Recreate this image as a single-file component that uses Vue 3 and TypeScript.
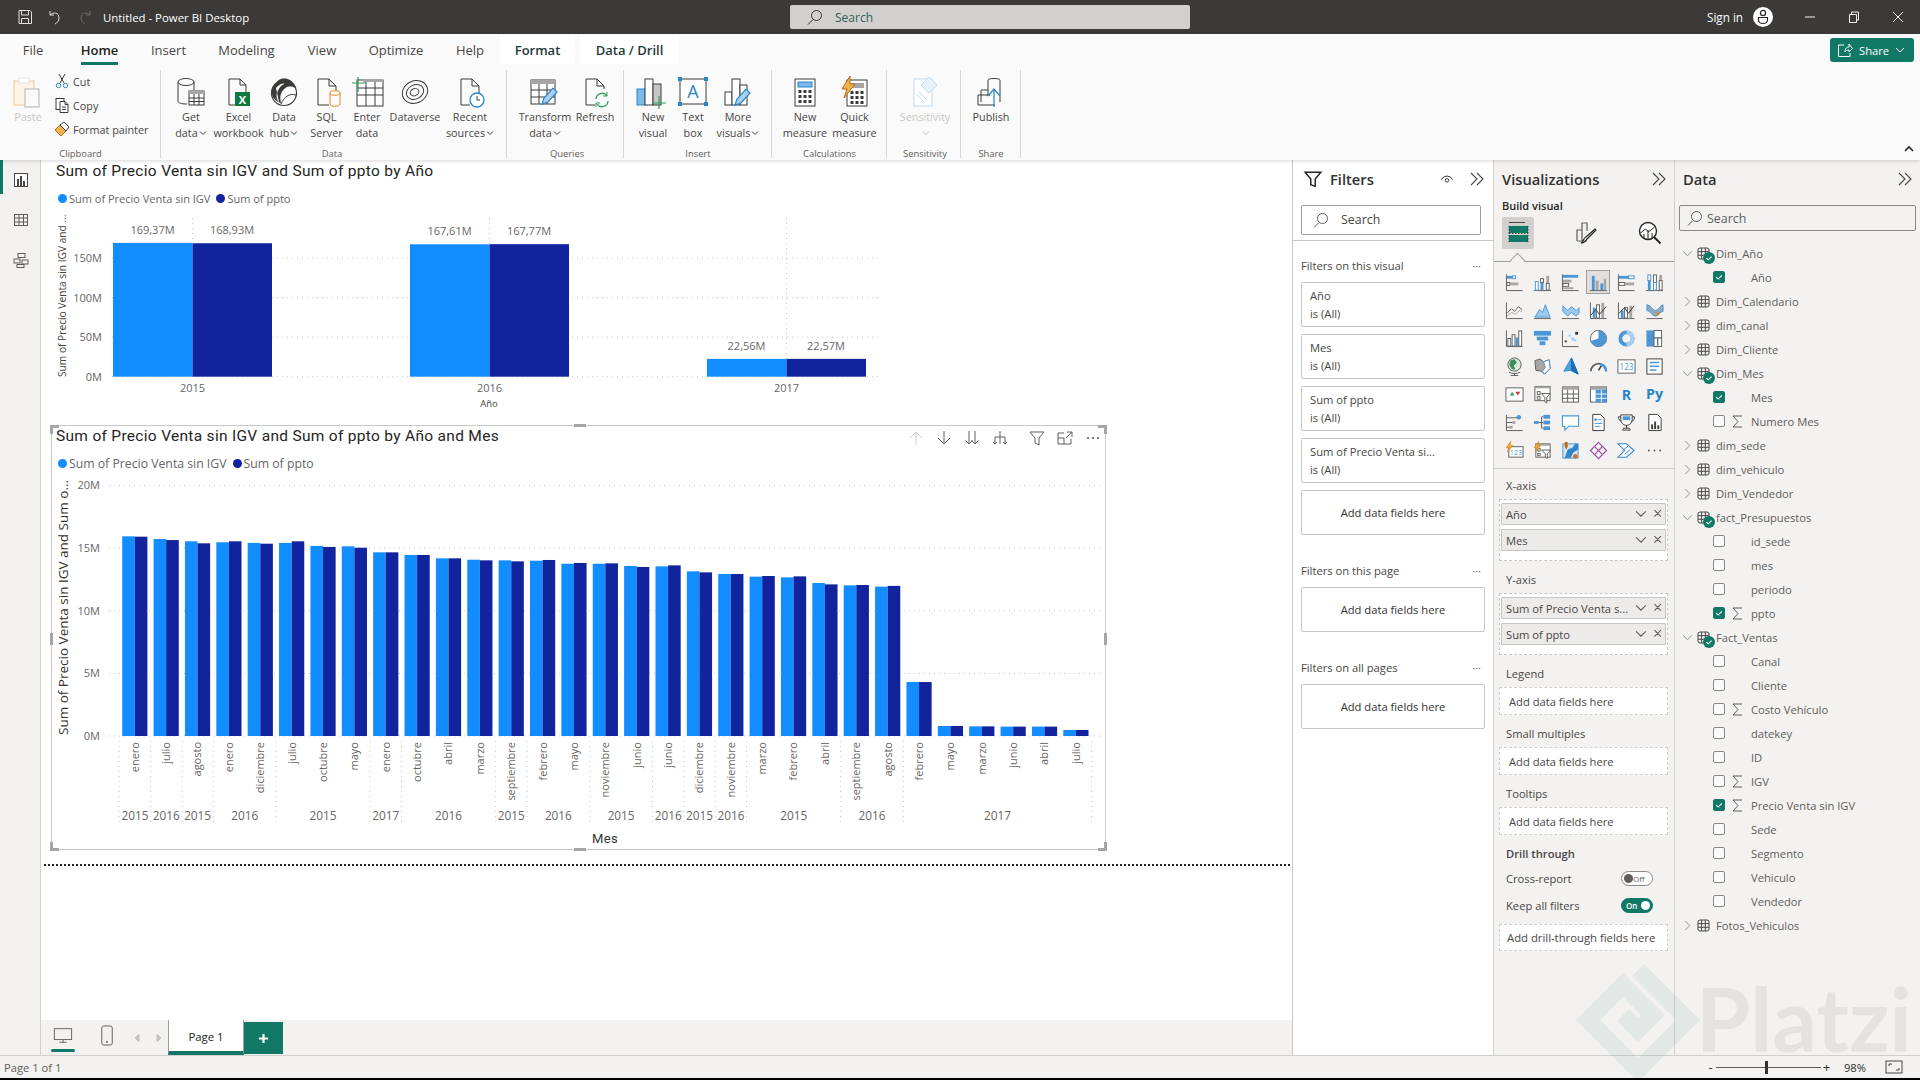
<script setup lang="ts">
import { computed } from 'vue'

const D = '#605e5c'
const K = '#3b3a39'
const B = '#4a96d6'
const L = '#9cc9ee'
const G = '#a8a6a4'
const T = '#117865'
const O = '#e08a1e'

const r = (x: number, y: number, w: number, h: number, f = B, s = 'none') =>
  `<rect x="${x}" y="${y}" width="${w}" height="${h}" fill="${f}" stroke="${s}"/>`
const p = (d: string, s = D, f = 'none', w = 1) =>
  `<path d="${d}" stroke="${s}" fill="${f}" stroke-width="${w}"/>`
const c = (x: number, y: number, rad: number, f = 'none', s = D, w = 1) =>
  `<circle cx="${x}" cy="${y}" r="${rad}" fill="${f}" stroke="${s}" stroke-width="${w}"/>`
const t = (x: number, y: number, s: string, f: string, size: number, weight = 400) =>
  `<text x="${x}" y="${y}" fill="${f}" font-size="${size}" font-weight="${weight}" text-anchor="middle" font-family="Open Sans, sans-serif">${s}</text>`

const axis = p('M1.5 1.5v17h17')
const bolt = p('M6 0.5L1.5 7h3L2.5 11.5 8 5H5z', O, '#f0b24a')

const gallery: string[] = [
  axis + r(2, 3, 6, 3) + r(8, 3, 3, 3, '#fff', B) + r(2, 10, 3, 3, '#fff', D) + r(5, 10, 9, 3, G),
  p('M1 18.5h18') + r(2.5, 9, 3, 9, '#fff', B) + r(8, 10, 3, 8, B) + r(8, 6, 3, 4, '#fff', D) + r(14, 3, 3, 8, G) + r(14, 11, 3, 7, '#fff', D),
  axis + r(2, 2, 16, 3) + r(2, 7, 9, 3, G) + r(2, 11, 6, 3, '#fff', D) + r(2, 15, 11, 2, G),
  p('M1 18.5h18') + r(3, 3, 3, 15, B) + r(7, 8, 3, 10, G) + r(12, 11, 3, 7, B) + r(15.5, 6, 2.5, 12, G),
  axis + r(2, 3, 10, 3, B) + r(12, 3, 6, 3, '#fff', B) + r(2, 10, 6, 3, '#fff', D) + r(8, 10, 10, 3, G),
  p('M1 18.5h18') + r(3, 8, 3, 10, B) + r(3, 2, 3, 6, '#fff', B) + r(9, 2, 3, 8, '#fff', D) + r(9, 10, 3, 8, '#fff', B) + r(15, 2, 3, 6, G) + r(15, 8, 3, 10, '#fff', D),
  axis + p('M2 13l5-5 3 3 4-5 4 3') + p('M2 16l5-4 4 2 4-4 3 1', G),
  p('M1 18.5h18') + p('M2 17l5-8 3 3 3-8 5 13z', B, L),
  p('M1 18.5h18') + p('M2 5l5 5 4-4 5 4 3-3v6l-3 3-5-4-4 4-5-5z', B, L),
  axis + r(4, 7, 3, 11, B) + r(8, 4, 3, 14, '#fff', D) + r(13, 2, 3, 16, G) + p('M2 15l5-6 4 5 7-8', K),
  axis + r(4, 10, 3, 8, B) + r(8, 7, 3, 11, '#fff', D) + r(13, 5, 3, 13, G) + p('M2 13l6-6 4 6 6-8', K),
  p('M1.5 18.5h17', D) + p('M2 4c5 0 5 6 9 6s5-6 8-6v7c-4 0-4 5-8 5s-5-6-9-6z', B, '#8fa7bc') + r(12, 12, 3, 3, O),
  axis + r(3, 10, 3, 8, '#fff', D) + r(7.5, 6, 3, 12, '#fff', D) + r(11, 9, 3, 9, B) + r(14.5, 2, 3, 16, '#fff', D),
  r(1, 2, 18, 5) + r(4, 8, 12, 4) + r(7, 13, 6, 4),
  axis + r(4, 12, 2, 2, K) + r(8, 6, 2, 2, L) + r(11, 9, 3, 3, L) + r(15, 3, 3, 3, K) + r(14, 11, 2, 2, L),
  c(10, 10, 8.5, '#fff') + p('M10 10V1.5a8.5 8.5 0 0 1 0 17 8.5 8.5 0 0 1-8.2-6z', 'none', B),
  c(10, 10, 6.5, 'none', B, 4) + p('M10 3.5a6.5 6.5 0 0 1 0 13', '#a9cfee', 'none', 4),
  r(1.5, 1.5, 8, 17) + r(9.5, 1.5, 8, 8, '#fff', D) + r(9.5, 9.5, 4, 9, '#fff', D) + r(13.5, 9.5, 4, 9, '#fff', D),
  c(10, 8, 7, '#d8e8d8', D) + p('M6 4l4-1 2 3-3 3 1 4-3-1-2-4z', '#3e8e5a', '#3e8e5a') + p('M4 16c4 2 8 2 12 0M10 17v2M6 19.5h8'),
  p('M2 4l5-2 4 3 6-2 1 9-6 6-3-3-6-1z', D, G) + p('M11 5l6-2 1 9-6 6-2-3 3-4z', B, '#fff'),
  p('M11 1L18 18l-8-4-7 1z', '#2a88cc', '#4aa3e0') + p('M11 1v13l7 4z', '#1d6fae', '#1d6fae'),
  p('M2 15a8 8 0 0 1 16 0', D, 'none', 2) + p('M10 14l3-5', K, 'none', 1.6) + p('M12 7.6a8 8 0 0 1 6 7.4', B, 'none', 2.6),
  r(1, 3, 18, 14, '#fff', D) + t(10, 14, '123', B, 8.5),
  r(2, 2, 16, 16, '#fff', K) + r(5, 5, 10, 1.6) + r(5, 9, 10, 1.6) + r(5, 13, 7, 1.6),
  r(1, 3, 18, 14, '#fff', D) + p('M5 11l2.5-4 2.5 4z', 'none', '#2f9e5f') + p('M11 7h5l-2.5 4z', 'none', '#d13438'),
  r(2, 1.5, 16, 15, '#fff', D) + r(2, 1.5, 16, 2, G) + r(4.5, 7, 3, 3, '#fff', D) + r(4.5, 12, 3, 3, '#fff', D) + p('M9 9h9l-3.5 4v6l-2-1.5V13z', D, '#fff'),
  r(1.5, 2, 17, 16, '#fff', D) + r(1.5, 2, 17, 3, G) + p('M1.5 9.5h17M1.5 14h17M7 5v13M13 5v13'),
  r(1.5, 2, 17, 16, '#fff', D) + r(1.5, 2, 17, 3, G) + r(7, 5, 11.5, 13) + p('M7 9.5h11.5M7 14h11.5M13 5v13', '#fff'),
  t(10, 16, 'R', '#2a86c8', 15, 700),
  t(10, 15, 'Py', '#2a86c8', 15, 700),
  p('M1.5 2v16.5h17') + p('M2 5h11M2 10h6M2 15h3', D) + c(14.5, 4.5, 2, B, B) + r(8, 8.5, 3, 3, G) + r(5, 13.5, 3, 3, G),
  r(1, 8.5, 5, 3) + p('M6 10h3M9 4v12M9 4h2M9 10h2M9 16h2') + r(11, 2, 7, 4) + r(11, 8, 7, 4) + r(11, 14, 7, 4),
  p('M1.5 3h17v11H8l-4 4v-4H1.5z', B, '#fff', 1.2),
  p('M4 1.5h8l4 4v13H4z', K, '#fff') + c(7, 7, 1, B, B) + p('M9 7h4M6 11h8M6 14h6', B),
  p('M4 2h12v5a6 6 0 0 1-12 0z', K, '#fff') + r(6, 3.5, 8, 4) + p('M4 4H1.5c0 3 1 4 3 4.5M16 4h2.5c0 3-1 4-3 4.5M10 13v3M6 18h8l-1-2H7z', K),
  p('M4 1.5h9l4 4v13H4z', K, '#fff') + r(6.5, 12, 2, 5, K) + r(9.7, 9, 2, 8, K) + r(13, 13, 2, 4, K),
  r(4, 6, 15, 11, '#fff', D) + t(11.5, 15, '123', B, 7.5) + bolt,
  r(3, 3, 15, 14, '#fff', D) + r(3, 3, 15, 2, G) + r(5, 8, 2.5, 2.5, '#fff', D) + r(5, 13, 2.5, 2.5, '#fff', D) + p('M9 9.5h9.5l-3.5 4v5l-2-1.5v-3.5z', D, '#fff') + bolt,
  r(2, 3, 16, 15, '#d5e6f5', B) + p('M4 18l3-9 5-2 3-4h3v6l-5 3-3 6z', 'none', '#2f86c8') + p('M4 1h3v5L5.5 9 4 6z', 'none', '#c8640c') + c(15, 16, 2.4, '#d9701c', 'none'),
  p('M10 1.5L18.5 10 10 18.5 1.5 10z', '#9c4aa8', 'none', 1.2) + p('M6 6l8 8M14 6l-8 8', '#9c4aa8', 'none', 1.2),
  p('M1 3h9l8 7-8 7H1l7-7z', '#2f86c8', '#fff', 1.1) + p('M6 10l6-5M8 14l6-5', '#2f86c8'),
  `<g fill="${D}"><circle cx="4" cy="10" r="1"/><circle cx="10" cy="10" r="1"/><circle cx="16" cy="10" r="1"/></g>`
]

const pencil = (x: number, y: number) =>
  `<g transform="translate(${x} ${y})">` + p('M0 16l2-6L11 0l4 4-9 10z', '#2a86c8', '#a8d0f0', 1.2) + '</g>'

const big = {
  getData: p('M3 6v19c0 2 3 3 9 3', K) + `<ellipse cx="11" cy="6" rx="8" ry="3.5" fill="#fff" stroke="${K}"/>` + p('M19 6v8', K) + r(14, 15, 15, 14, '#fff', K) + r(14, 15, 15, 3, G) + p('M14 22h15M14 25.5h15M19 18v11M24 18v11', K),
  excel: p('M6 3h11l6 6v9M17 3v6h6M6 3v26h7', K) + r(12, 16, 15, 14, '#10793f') + t(19.5, 27.5, 'X', '#fff', 11, 700),
  hub: c(16, 17, 12.5, '#fff', K, 1.2) + p('M13 3c6-2 13 2 15 9-6-3-9-2-12 1s-5 7-3 14C6 25 3 19 4 14c1-5 5-9 9-11z', K, K, 0.3) + p('M8 12c3-3 6-5 8-4-3 1-6 5-7 9s0 7 2 9', '#fff', '#fff', 0.3) + p('M13 28c3-7 8-11 15-9', K),
  sql: p('M7 3h11l7 7v5M18 3v7h7M7 3v26h11', K) + `<ellipse cx="24" cy="17" rx="5" ry="2.2" fill="#fff" stroke="${O}"/>` + p('M19 17v11c0 3 10 3 10 0V17', O),
  enter: r(6, 4, 26, 26, '#fff', K) + r(12, 3, 20, 3, G) + p('M6 12h26M6 19h26M15 6v24M24 6v24', K) + p('M7 1v15M1 7h14', '#2f9e5f', 'none', 1.2),
  dataverse: `<g transform="rotate(-25 16 16)" fill="none" stroke="${K}"><ellipse cx="16" cy="16" rx="13" ry="11"/><ellipse cx="16" cy="16" rx="9" ry="7"/><ellipse cx="15.500" cy="16" rx="4.500" ry="3.500"/></g>`,
  recent: p('M7 3h11l7 7v10M18 3v7h7M7 3v26h9', K) + c(23, 24, 7, '#fff', '#2a86c8', 1.3) + p('M23 20v4h3', K),
  transform: r(2, 4, 24, 24, '#fff', K) + r(2, 4, 24, 4, G) + p('M2 14h24M2 21h24M10 8v20M18 8v20', K) + pencil(13, 12),
  refresh: p('M7 3h11l7 7v3M18 3v7h7M7 3v26h9', K) + p('M17 23a6 6 0 0 1 11-3M29 25a6 6 0 0 1-11 3', '#2f9e5f', 'none', 1.3) + p('M28 16v4h-4M17 31v-4h4', '#2f9e5f'),
  visual: r(0, 13, 8, 16, '#7db8ea', '#2a86c8') + r(8, 3, 8, 26, '#fff', K) + r(16, 8, 8, 21, '#c8c6c4', K) + p('M22 20v13M16 27h13', '#2f9e5f', 'none', 1.2),
  text: r(3, 3, 26, 25, '#fff', K) + t(16, 22, 'A', '#2a86c8', 18) + r(1, 1, 4, 4, '#2a86c8') + r(27, 1, 4, 4, '#2a86c8') + r(1, 26, 4, 4, '#2a86c8') + r(27, 26, 4, 4, '#2a86c8'),
  more: r(3, 16, 7, 13, '#fff', K) + r(10, 3, 8, 26, '#fff', K) + r(18, 9, 7, 20, '#fff', K) + pencil(13, 13),
  measure: r(6, 3, 20, 27, '#fff', K) + r(9, 6, 14, 5, '#7db8ea', '#2a86c8') + `<g fill="${K}">` + [14, 19, 24].map(y => [9.5, 14.5, 19.5].map(x => `<rect x="${x}" y="${y}" width="3" height="3"/>`).join('')).join('') + '</g>',
  quick: r(8, 4, 20, 26, '#fff', K) + r(11, 7, 14, 5, G) + `<g fill="${K}">` + [15, 20, 25].map(y => [11.5, 16.5, 21.5].map(x => `<rect x="${x}" y="${y}" width="3" height="3"/>`).join('')).join('') + '</g>' + p('M11 0L3 13h5L5 22l11-14h-5z', '#b56a10', '#f0b24a'),
  sensitivity: r(5, 3, 18, 27, '#fff', '#bcdcf2') + p('M8 19l8 8M10 16l8 8M20 1l8 8-8 8-8-8z', '#bcdcf2', '#e8f2fa'),
  publish: p('M6 26V14h7M13 20V4c0-2 12-2 12 0v22M3 29V19h12M3 29h17', K) + p('M19 31V14M13 20l6-7 6 7', '#2a86c8', 'none', 1.2),
  paste: r(2, 5, 20, 24, '#fdf3e6', '#efc999') + r(7, 2, 10, 5, '#fff', '#e6e3e0') + r(13, 13, 14, 18, '#fafafa', '#b5b3b1')
}

interface Btn { lines: string[]; icon: string; w: number; caret?: boolean; off?: boolean }
interface Grp { label: string; pl: number; pr: number; items: Btn[] }

const groups: Grp[] = [
  { label: 'Data', pl: 6, pr: 10, items: [
    { lines: ['Get', 'data'], icon: big.getData, w: 48, caret: true },
    { lines: ['Excel', 'workbook'], icon: big.excel, w: 47 },
    { lines: ['Data', 'hub'], icon: big.hub, w: 44, caret: true },
    { lines: ['SQL', 'Server'], icon: big.sql, w: 41 },
    { lines: ['Enter', 'data'], icon: big.enter, w: 40 },
    { lines: ['Dataverse'], icon: big.dataverse, w: 56 },
    { lines: ['Recent', 'sources'], icon: big.recent, w: 54, caret: true }
  ] },
  { label: 'Queries', pl: 10, pr: 7, items: [
    { lines: ['Transform', 'data'], icon: big.transform, w: 56, caret: true },
    { lines: ['Refresh'], icon: big.refresh, w: 44 }
  ] },
  { label: 'Insert', pl: 7, pr: 7, items: [
    { lines: ['New', 'visual'], icon: big.visual, w: 44 },
    { lines: ['Text', 'box'], icon: big.text, w: 36 },
    { lines: ['More', 'visuals'], icon: big.more, w: 54, caret: true }
  ] },
  { label: 'Calculations', pl: 8, pr: 8, items: [
    { lines: ['New', 'measure'], icon: big.measure, w: 50 },
    { lines: ['Quick', 'measure'], icon: big.quick, w: 49 }
  ] },
  { label: 'Sensitivity', pl: 8, pr: 6, items: [
    { lines: ['Sensitivity', ''], icon: big.sensitivity, w: 60, caret: true, off: true }
  ] },
  { label: 'Share', pl: 8, pr: 8, items: [
    { lines: ['Publish'], icon: big.publish, w: 44 }
  ] }
]

const tabs = [
  { n: 'File', w: 60 }, { n: 'Home', w: 73, active: true }, { n: 'Insert', w: 65 }, { n: 'Modeling', w: 91 },
  { n: 'View', w: 60 }, { n: 'Optimize', w: 88 }, { n: 'Help', w: 60 },
  { n: 'Format', w: 75, ctx: true }, { n: 'Data / Drill', w: 99, ctx: true, gap: true }
]

const clip = [
  { n: 'Cut', i: p('M5 1l5 9M11 1L6 10', K) + c(4.5, 12.5, 2.2, 'none', '#2a86c8') + c(11.5, 12.5, 2.2, 'none', '#2a86c8') },
  { n: 'Copy', i: r(2, 1.5, 8, 11, '#fff', K) + p('M6 4.5h5l3 3v8H6zM11 4.5v3h3M8 10h4M8 12.5h4', K, '#fff') },
  { n: 'Format painter', i: p('M1 9l5-5 6 6-5 5z', '#b56a10', '#f0b24a') + p('M6 4l4-3 5 5-3 4z', K, '#fff') }
]

const filterCards = ['Año', 'Mes', 'Sum of ppto', 'Sum of Precio Venta si...']

const Row = (n: string, kind: 'closed' | 'open' | 'field', o: { on?: boolean; sum?: boolean } = {}) => ({ n, kind, ...o })
const rows = [
  Row('Dim_Año', 'open'), Row('Año', 'field', { on: true }),
  Row('Dim_Calendario', 'closed'), Row('dim_canal', 'closed'), Row('Dim_Cliente', 'closed'),
  Row('Dim_Mes', 'open'), Row('Mes', 'field', { on: true }), Row('Numero Mes', 'field', { sum: true }),
  Row('dim_sede', 'closed'), Row('dim_vehiculo', 'closed'), Row('Dim_Vendedor', 'closed'),
  Row('fact_Presupuestos', 'open'), Row('id_sede', 'field'), Row('mes', 'field'), Row('periodo', 'field'),
  Row('ppto', 'field', { on: true, sum: true }),
  Row('Fact_Ventas', 'open'), Row('Canal', 'field'), Row('Cliente', 'field'),
  Row('Costo Vehículo', 'field', { sum: true }), Row('datekey', 'field'), Row('ID', 'field'),
  Row('IGV', 'field', { sum: true }), Row('Precio Venta sin IGV', 'field', { on: true, sum: true }),
  Row('Sede', 'field'), Row('Segmento', 'field'), Row('Vehiculo', 'field'), Row('Vendedor', 'field'),
  Row('Fotos_Vehiculos', 'closed')
]

/* Chart 1 */
const y1 = (v: number) => 376.7 - v * 0.79
const ticks1 = [150, 100, 50, 0]
const years1 = [
  { y: '2015', x: 113, a: 169.37, b: 168.93, la: '169,37M', lb: '168,93M' },
  { y: '2016', x: 410, a: 167.61, b: 167.77, la: '167,61M', lb: '167,77M' },
  { y: '2017', x: 707, a: 22.56, b: 22.57, la: '22,56M', lb: '22,57M' }
]

/* Chart 2 */
const months: [string, number, number, number][] = [
  ['enero', 15.95, 15.92, 2015], ['julio', 15.73, 15.65, 2016], ['agosto', 15.55, 15.39, 2015],
  ['enero', 15.47, 15.55, 2016], ['diciembre', 15.42, 15.36, 2016], ['julio', 15.42, 15.55, 2015],
  ['octubre', 15.18, 15.10, 2015], ['mayo', 15.15, 15.04, 2015], ['enero', 14.67, 14.67, 2017],
  ['octubre', 14.46, 14.46, 2016], ['abril', 14.19, 14.19, 2016], ['marzo', 14.08, 14.03, 2016],
  ['septiembre', 14.03, 13.95, 2015], ['febrero', 14.0, 14.06, 2016], ['mayo', 13.76, 13.82, 2016],
  ['noviembre', 13.76, 13.79, 2015], ['junio', 13.58, 13.5, 2015], ['junio', 13.55, 13.63, 2016],
  ['diciembre', 13.15, 13.07, 2015], ['noviembre', 12.94, 12.94, 2016], ['marzo', 12.73, 12.78, 2015],
  ['febrero', 12.67, 12.75, 2015], ['abril', 12.22, 12.11, 2015], ['septiembre', 12.03, 12.06, 2016],
  ['agosto', 11.93, 11.99, 2016], ['febrero', 4.31, 4.31, 2017], ['mayo', 0.8, 0.8, 2017],
  ['marzo', 0.77, 0.77, 2017], ['junio', 0.75, 0.75, 2017], ['abril', 0.75, 0.75, 2017], ['julio', 0.48, 0.48, 2017]
]
const X0 = 119.2
const PER = 31.37
const BW = 12.6
const y2 = (v: number) => 736 - v * 12.52
const ticks2 = [20, 15, 10, 5, 0]
const bars2 = computed(() => months.map((m, i) => ({ name: m[0], a: m[1], b: m[2], x: X0 + i * PER })))
const spans = computed(() => {
  const out: { year: number; start: number; end: number }[] = []
  months.forEach((m, i) => {
    const last = out[out.length - 1]
    if (last && last.year === m[3]) last.end = i + 1
    else out.push({ year: m[3], start: i, end: i + 1 })
  })
  return out
})
const header = [
  { k: 'up', i: p('M8 15V2M2 8l6-6 6 6', '#d2d0ce') },
  { k: 'down', i: p('M8 1v13M2 8l6 6 6-6', '#605e5c') },
  { k: 'dbl', i: p('M5 1v13M1.5 10.5L5 14l3.5-3.5M11 1v13M7.5 10.5L11 14l3.5-3.5', '#605e5c') },
  { k: 'tree', i: p('M8 1v6M3 7h10M3 7v7M13 7v7M1 12l2 2 2-2M11 12l2 2 2-2M8 7v7', '#605e5c') },
  { k: 'filter', i: p('M1 2h14L10 8v7l-4-2V8z', '#605e5c'), gap: true },
  { k: 'focus', i: p('M7 3H1v11h13V9M1 8h6v6M10 2h5v5M15 2L9 8', '#605e5c') },
  { k: 'more', i: `<g fill="#605e5c"><circle cx="3" cy="8" r="1.1"/><circle cx="8" cy="8" r="1.1"/><circle cx="13" cy="8" r="1.1"/></g>` }
]

const chevrons = p('M3 3l6 6-6 6M9 3l6 6-6 6', '#484644', 'none', 1.1)
const searchI = p('M9.5 1.5a5 5 0 1 1 0 10 5 5 0 0 1 0-10zM6 10.5l-5 5', '#605e5c', 'none', 1)
const tableI = r(1, 1, 11, 11, 'none', '#484644').replace('<rect', '<rect rx="2"') + p('M1 4.6h11M1 8.3h11M4.6 1v11M8.3 1v11', '#484644')
const sigma = p('M11 2H2l5 5.5L2 13h9', '#605e5c')
const pillIc = p('M1 2l4.500 4.500L10 2M18 1l6 6M24 1l-6 6', '#605e5c')
</script>

<template>
  <div class="app">
    <header class="titlebar">
      <div class="tb-left">
        <svg class="tb-ic" viewBox="0 0 16 16" v-html="p('M2 1.5h11l1.500 1.500v11.500H2zM4.500 1.500v4.500h7V1.500M4.500 14.500V9.500h7v5', '#e1dfdd')"></svg>
        <svg class="tb-ic" viewBox="0 0 16 16" v-html="p('M3 2v4h4M3 6c3-3 9-3 9 3 0 3-2 5-4 6', '#e1dfdd')"></svg>
        <svg class="tb-ic" viewBox="0 0 16 16" v-html="p('M13 2v4H9M13 6c-3-3-9-3-9 3 0 3 2 5 4 6', '#6d6c6a')"></svg>
        <span class="tb-title">Untitled - Power BI Desktop</span>
      </div>
      <div class="tb-search">
        <svg class="ic16" viewBox="0 0 16 16" v-html="p('M9.500 1.500a5 5 0 1 1 0 10 5 5 0 0 1 0-10zM6 10.500l-5 5', '#3b3a39')"></svg>
        <span>Search</span>
      </div>
      <div class="tb-right">
        <span class="signin">Sign in</span>
        <svg class="avatar" viewBox="0 0 20 20" v-html="c(10,10,10,'#fff','none') + c(10,6,2.600,'none','#252423',1.200) + p('M5.500 10.500h9v2.500c0 2-2 3.500-4.500 3.500s-4.500-1.500-4.500-3.500z','#252423','none',1.200)"></svg>
        <div class="win"><svg viewBox="0 0 12 12" v-html="p('M1 6h10','#f3f2f1')"></svg></div>
        <div class="win"><svg viewBox="0 0 12 12" v-html="p('M1.500 3.500h7v8h-7zM3.500 3.500V1h7v8H8.500','#f3f2f1')"></svg></div>
        <div class="win"><svg viewBox="0 0 12 12" v-html="p('M1 1l10 10M11 1L1 11','#f3f2f1')"></svg></div>
      </div>
    </header>

    <section class="ribbon">
      <nav class="tabs">
        <div
          v-for="tab in tabs"
          :key="tab.n"
          class="tab"
          :class="{ active: tab.active, ctx: tab.ctx, gap: tab.gap }"
          :style="{ width: tab.w + 'px' }"
        >{{ tab.n }}<i v-if="tab.active" class="tab-bar"></i></div>
        <button class="share">
          <svg class="ic16" viewBox="0 0 16 16" v-html="p('M7 3H1.500v11.500H13V11M8 10c0-4 2-5 4-5V2l3.500 4.500L12 10V8c-2 0-3 .5-4 2z','#fff')"></svg>
          <span>Share</span>
          <svg class="ic9" viewBox="0 0 10 10" v-html="p('M1 3l4 4 4-4','#fff')"></svg>
        </button>
      </nav>
      <div class="groups">
        <div class="group clipboard">
          <div class="group-body">
            <div class="paste">
              <svg class="big" viewBox="0 0 32 32" v-html="big.paste"></svg>
              <span>Paste</span>
            </div>
            <div class="clip-list">
              <div v-for="a in clip" :key="a.n" class="clip-item">
                <svg class="ic16" viewBox="0 0 16 16" v-html="a.i"></svg>
                <span>{{ a.n }}</span>
              </div>
            </div>
          </div>
          <div class="group-label">Clipboard</div>
        </div>
        <div
          v-for="g in groups"
          :key="g.label"
          class="group"
          :style="{ paddingLeft: g.pl + 'px', paddingRight: g.pr + 'px' }"
        >
          <div class="group-body">
            <div
              v-for="b in g.items"
              :key="b.lines.join()"
              class="rbtn"
              :class="{ off: b.off }"
              :style="{ width: b.w + 'px' }"
            >
              <svg class="big" viewBox="0 0 32 32" v-html="b.icon"></svg>
              <span v-for="(l, i) in b.lines" :key="i" class="rline">{{ l }}<svg
                v-if="b.caret && i === b.lines.length - 1"
                class="caret"
                viewBox="0 0 8 8"
                v-html="p('M1 2.500l3 3 3-3', b.off ? '#c8c6c4' : '#3b3a39')"
              ></svg></span>
            </div>
          </div>
          <div class="group-label">{{ g.label }}</div>
        </div>
      </div>
      <svg class="collapse" viewBox="0 0 10 8" v-html="p('M1 6l4-4 4 4', '#252423', 'none', 1.600)"></svg>
    </section>

    <main class="main">
      <aside class="rail">
        <i class="rail-mark"></i>
        <svg class="rail-ic" viewBox="0 0 16 16" v-html="r(1.500,1.500,13,13,'#fff','#484644') + r(4,7,2,7,'#484644') + r(7,4,2,10,'#484644') + r(10,9,2,5,'#484644')"></svg>
        <svg class="rail-ic" viewBox="0 0 16 16" v-html="r(1.500,2.500,13,11,'none','#605e5c') + p('M1.500 6h13M1.500 10h13M6 2.500v11M10.500 2.500v11')"></svg>
        <svg class="rail-ic" viewBox="0 0 16 16" v-html="r(5,1.500,7,4,'none','#605e5c') + r(1,7,6,4,'none','#605e5c') + r(9,8,6,4,'none','#605e5c') + r(4,12.500,7,3,'none','#605e5c')"></svg>
      </aside>

      <div class="center">
        <div class="canvas">
          <article class="visual v1">
            <h2 class="vtitle">Sum of Precio Venta sin IGV and Sum of ppto by Año</h2>
            <div class="legend small">
              <i class="dot a"></i><span>Sum of Precio Venta sin IGV</span>
              <i class="dot b"></i><span>Sum of ppto</span>
            </div>
            <svg class="plot p1" viewBox="51 210 1055 205">
              <line v-for="tk in ticks1" :key="tk" x1="112" x2="880" :y1="y1(tk)" :y2="y1(tk)" class="grid" />
              <line v-for="yr in years1" :key="'v' + yr.y" :x1="yr.x + 79.500" :x2="yr.x + 79.500" y1="218" :y2="y1(yr.a)" class="grid" />
              <text v-for="tk in ticks1" :key="'t' + tk" x="102" :y="y1(tk)" dy=".35em" text-anchor="end" class="tick">{{ tk }}M</text>
              <text class="ytitle-s" transform="rotate(-90 62 377)" x="62" y="377" dy=".35em">Sum of Precio Venta sin IGV and ...</text>
              <g v-for="yr in years1" :key="yr.y">
                <rect :x="yr.x" :y="y1(yr.a)" width="79.500" :height="376.700 - y1(yr.a)" fill="#118dff" />
                <rect :x="yr.x + 79.500" :y="y1(yr.b)" width="79.500" :height="376.700 - y1(yr.b)" fill="#12239e" />
                <text :x="yr.x + 39.500" :y="y1(yr.a) - 13" dy=".35em" text-anchor="middle" class="tick">{{ yr.la }}</text>
                <text :x="yr.x + 119" :y="y1(yr.a) - 13" dy=".35em" text-anchor="middle" class="tick">{{ yr.lb }}</text>
                <text :x="yr.x + 79.500" y="388" dy=".35em" text-anchor="middle" class="tick">{{ yr.y }}</text>
              </g>
              <text x="489" y="404" dy=".35em" text-anchor="middle" class="xtitle-s">Año</text>
            </svg>
          </article>

          <article class="visual v2">
            <h2 class="vtitle">Sum of Precio Venta sin IGV and Sum of ppto by Año and Mes</h2>
            <div class="legend">
              <i class="dot a"></i><span>Sum of Precio Venta sin IGV</span>
              <i class="dot b"></i><span>Sum of ppto</span>
            </div>
            <svg class="plot p2" viewBox="51 478 1055 372">
              <line v-for="tk in ticks2" :key="tk" x1="109" x2="1102" :y1="y2(tk)" :y2="y2(tk)" class="grid" />
              <text v-for="tk in ticks2" :key="'t' + tk" x="100" :y="y2(tk)" dy=".35em" text-anchor="end" class="tick">{{ tk }}M</text>
              <text class="ytitle" transform="rotate(-90 63 735)" x="63" y="735" dy=".35em">Sum of Precio Venta sin IGV and Sum o...</text>
              <g v-for="m in bars2" :key="m.x">
                <rect :x="m.x + 3" :y="y2(m.a)" :width="BW" :height="736 - y2(m.a)" fill="#118dff" />
                <rect :x="m.x + 3 + BW" :y="y2(m.b)" :width="BW" :height="736 - y2(m.b)" fill="#12239e" />
                <text class="month" :transform="`rotate(-90 ${m.x + PER / 2} 742)`" :x="m.x + PER / 2" y="742" dy=".35em" text-anchor="end">{{ m.name }}</text>
              </g>
              <g v-for="s in spans" :key="s.start">
                <line :x1="X0 + s.start * PER" :x2="X0 + s.start * PER" y1="741" y2="826" class="grid" />
                <text :x="X0 + (s.start + s.end) / 2 * PER" y="816" dy=".35em" text-anchor="middle" class="year">{{ s.year }}</text>
              </g>
              <line :x1="X0 + 31 * PER" :x2="X0 + 31 * PER" y1="741" y2="826" class="grid" />
              <text x="605" y="838" dy=".35em" text-anchor="middle" class="xtitle">Mes</text>
            </svg>
            <div class="frame">
              <i class="h tl"></i><i class="h tr"></i><i class="h bl"></i><i class="h br"></i>
              <i class="m mt"></i><i class="m mb"></i><i class="m ml"></i><i class="m mr"></i>
            </div>
            <div class="vheader">
              <svg
                v-for="hd in header"
                :key="hd.k"
                class="ic16 vh"
                :class="{ gap: hd.gap }"
                viewBox="0 0 16 16"
                v-html="hd.i"
              ></svg>
            </div>
          </article>

          <div class="page-end"></div>
        </div>
        <div class="pagebar">
          <div class="view-btn">
            <svg class="pv" viewBox="0 0 22 18" v-html="r(1.500,1.500,19,12,'none','#605e5c') + p('M11 13.500v3M7 16.500h8')"></svg>
            <i class="view-line"></i>
          </div>
          <div class="view-btn phone">
            <svg class="pv2" viewBox="0 0 14 22" v-html="r(1.500,1,11,20,'none','#605e5c').replace('<rect','<rect rx=&quot;2&quot;') + r(6,17,2,1.500,'#605e5c')"></svg>
          </div>
          <svg class="nav" viewBox="0 0 8 10" v-html="p('M6 1L2 5l4 4z','#c8c6c4','#c8c6c4')"></svg>
          <svg class="nav n2" viewBox="0 0 8 10" v-html="p('M2 1l4 4-4 4z','#c8c6c4','#c8c6c4')"></svg>
          <div class="page-tab">Page 1</div>
          <div class="add-tab">
            <svg viewBox="0 0 12 12" v-html="p('M6 1v10M1 6h10','#fff','none',2.400)"></svg>
          </div>
        </div>
      </div>

      <aside class="filters">
        <div class="panel-head">
          <svg class="ic18" viewBox="0 0 16 16" v-html="p('M1 2h14L10 8v6.500L6 13V8z','#252423','none',1.300)"></svg>
          <span class="panel-title">Filters</span>
          <svg class="eye" viewBox="0 0 16 16" v-html="p('M1.500 9a7 7 0 0 1 13 0','#252423') + c(8,9.500,2,'none','#252423')"></svg>
          <svg class="chev" viewBox="0 0 18 18" v-html="chevrons"></svg>
        </div>
        <div class="f-search">
          <svg class="ic16" viewBox="0 0 16 16" v-html="searchI"></svg>
          <span>Search</span>
        </div>
        <div class="f-rule"></div>
        <div class="f-sec first"><span>Filters on this visual</span><b>···</b></div>
        <div v-for="fc in filterCards" :key="fc" class="f-card">
          <span>{{ fc }}</span>
          <span>is (All)</span>
        </div>
        <div class="f-card add">Add data fields here</div>
        <div class="f-sec"><span>Filters on this page</span><b>···</b></div>
        <div class="f-card add">Add data fields here</div>
        <div class="f-sec"><span>Filters on all pages</span><b>···</b></div>
        <div class="f-card add">Add data fields here</div>
      </aside>

      <aside class="viz">
        <div class="panel-head tight">
          <span class="panel-title">Visualizations</span>
          <svg class="chev end" viewBox="0 0 18 18" v-html="chevrons"></svg>
        </div>
        <div class="build">Build visual</div>
        <div class="build-tabs">
          <div class="bt sel">
            <svg viewBox="0 0 24 24" v-html="p('M3 1.500h16','#484644') + r(3,5,19,7,T) + r(3,14,19,7,T) + p('M3 5v16M22 5v16M3 12.500h19','#252423','none',.8).replace('stroke-width','stroke-dasharray=&quot;1.500 1.500&quot; stroke-width')"></svg>
          </div>
          <div class="bt second">
            <svg viewBox="0 0 24 24" v-html="p('M9 20V2h5v8M4 20v-11h5M14 20h-10', '#605e5c', 'none', 1.200) + p('M23 9L14 18c-1 1-2 4-6 4 3-1 2-5 5-6l9-8z', '#252423', '#fff', 1.200)"></svg>
          </div>
          <div class="bt third">
            <svg viewBox="0 0 24 24" v-html="c(10,10,8.500,'#fff','#252423',1.400) + p('M6 18v-5M10 18V9M14 18v-6M2.500 12l5-4 3 3 6-5', '#252423') + p('M16 16l6.500 6.500', '#252423', 'none', 2)"></svg>
          </div>
        </div>
        <div class="viz-rule"><i class="notch"></i></div>
        <div class="gallery">
          <div v-for="(g, i) in gallery" :key="i" class="cell" :class="{ sel: i === 3 }">
            <svg viewBox="0 0 20 20" v-html="g"></svg>
          </div>
        </div>
        <div class="viz-rule low"></div>
        <div class="wells">
          <div class="wl">X-axis</div>
          <div class="well full">
            <div class="pill"><span>Año</span><svg viewBox="0 0 25 10" v-html="pillIc"></svg></div>
            <div class="pill"><span>Mes</span><svg viewBox="0 0 25 10" v-html="pillIc"></svg></div>
          </div>
          <div class="wl">Y-axis</div>
          <div class="well full">
            <div class="pill"><span>Sum of Precio Venta s...</span><svg viewBox="0 0 25 10" v-html="pillIc"></svg></div>
            <div class="pill"><span>Sum of ppto</span><svg viewBox="0 0 25 10" v-html="pillIc"></svg></div>
          </div>
          <div class="wl">Legend</div>
          <div class="well">Add data fields here</div>
          <div class="wl">Small multiples</div>
          <div class="well">Add data fields here</div>
          <div class="wl">Tooltips</div>
          <div class="well">Add data fields here</div>
          <div class="wl semi">Drill through</div>
          <div class="drill-row">
            <span>Cross-report</span>
            <span class="toggle"><em>Off</em><i></i></span>
          </div>
          <div class="drill-row">
            <span>Keep all filters</span>
            <span class="toggle on"><em>On</em><i></i></span>
          </div>
          <div class="well drill">Add drill-through fields here</div>
        </div>
      </aside>

      <aside class="data">
        <div class="panel-head tight">
          <span class="panel-title">Data</span>
          <svg class="chev end" viewBox="0 0 18 18" v-html="chevrons"></svg>
        </div>
        <div class="d-search">
          <svg class="ic16" viewBox="0 0 16 16" v-html="searchI"></svg>
          <span>Search</span>
        </div>
        <ul class="tree">
          <li v-for="row in rows" :key="row.n" class="row" :class="row.kind">
            <template v-if="row.kind !== 'field'">
              <svg class="tw" viewBox="0 0 12 12" v-html="row.kind === 'open' ? p('M1 3.500l5 5 5-5','#8a8886') : p('M3.500 1l5 5-5 5','#8a8886')"></svg>
              <span class="tbl">
                <svg viewBox="0 0 13 13" v-html="tableI"></svg>
                <svg v-if="row.kind === 'open'" class="badge" viewBox="0 0 12 12" v-html="c(6,6,6,T,'none') + p('M3.500 6.200l1.800 1.600 3.200-3.200','#fff','none',1.200)"></svg>
              </span>
            </template>
            <template v-else>
              <span class="cb" :class="{ on: row.on }">
                <svg v-if="row.on" viewBox="0 0 12 12" v-html="p('M2.500 6.200l2.500 2.300 4.500-4.500','#fff','none',1.300)"></svg>
              </span>
              <span class="sum"><svg v-if="row.sum" viewBox="0 0 13 15" v-html="sigma"></svg></span>
            </template>
            <span class="rname">{{ row.n }}</span>
          </li>
        </ul>
      </aside>
    </main>

    <footer class="status">
      <span>Page 1 of 1</span>
      <div class="zoom">
        <span class="zb">-</span>
        <span class="track"><i></i></span>
        <span class="zb">+</span>
        <span class="pct">98%</span>
        <svg class="fit" viewBox="0 0 18 14" v-html="r(1,1,16,12,'none','#484644') + p('M4 6V4h3M14 8v2h-3','#484644')"></svg>
      </div>
    </footer>

    <div class="watermark" aria-hidden="true">
      <svg viewBox="0 0 120 120" v-html="p('M60 10L110 60 60 110 10 60 45 25 75 55 60 70 45 55','#117865','none',17)"></svg>
      <span>Platzi</span>
    </div>
  </div>
</template>

<style scoped>
* { box-sizing: border-box; }
.app {
  position: relative;
  width: 1920px;
  height: 1080px;
  display: flex;
  flex-direction: column;
  overflow: hidden;
  background: #fff;
  font-family: "Open Sans", "Noto Sans", sans-serif;
  font-size: 11.2px;
  color: #252423;
  border-bottom: 2px solid #000;
}
svg { display: block; flex: none; overflow: visible; }
.ic16 { width: 16px; height: 16px; }
.ic18 { width: 18px; height: 18px; }
.ic9 { width: 10px; height: 10px; }

/* title bar */
.titlebar {
  height: 34px;
  flex: none;
  display: grid;
  grid-template-columns: 790px 400px 1fr;
  background: #3b3a39;
  color: #fff;
}
.tb-left { display: flex; align-items: center; padding-left: 17px; }
.tb-ic { width: 16px; height: 16px; margin-right: 14px; }
.tb-title { margin-left: -4px; font-size: 11.400px; }
.tb-search {
  height: 24px;
  margin-top: 5px;
  display: flex;
  align-items: center;
  gap: 12px;
  padding-left: 17px;
  background: #d2d0ce;
  border-radius: 2px;
  color: #35605a;
  font-size: 12px;
}
.tb-right { display: flex; align-items: center; justify-content: flex-end; }
.signin { font-size: 11.700px; }
.avatar { width: 20px; height: 20px; margin: 0 15px 0 10px; }
.win { width: 44px; height: 34px; display: flex; align-items: center; justify-content: center; }
.win svg { width: 12px; height: 12px; }

/* ribbon */
.ribbon {
  position: relative;
  z-index: 3;
  height: 126px;
  flex: none;
  background: #fafafa;
  box-shadow: 0 1px 4px rgba(0, 0, 0, 0.16);
}
.tabs { height: 30px; display: flex; padding-left: 3px; }
.tab {
  position: relative;
  display: flex;
  align-items: center;
  justify-content: center;
  padding-top: 1px;
  font-size: 13px;
  color: #484644;
}
.tab.active { color: #252423; font-weight: 600; }
.tab.ctx { background: #fff; color: #1f3a3a; font-weight: 600; }
.tab.gap { margin-left: 5px; }
.tab-bar { position: absolute; left: 18px; right: 18px; bottom: -1px; height: 3px; background: #117865; }
.share {
  margin: 4px 6px 0 auto;
  width: 84px;
  height: 24px;
  display: flex;
  align-items: center;
  gap: 6px;
  padding: 0 0 0 7px;
  border: 0;
  border-radius: 3px;
  background: #117865;
  color: #fff;
  font: inherit;
  font-size: 11.200px;
}
.groups { height: 96px; display: flex; }
.group { position: relative; display: flex; flex-direction: column; }
.group::after {
  content: "";
  position: absolute;
  right: 0;
  top: 6px;
  bottom: 2px;
  width: 1px;
  background: #d8d6d4;
}
.clipboard { width: 161px; }
.group-body { height: 83px; display: flex; }
.group-label { height: 13px; line-height: 13px; font-size: 9.400px; color: #605e5c; text-align: center; }
.rbtn { display: flex; flex-direction: column; align-items: center; padding-top: 12px; color: #484644; }
.big { width: 32px; height: 32px; }
.rline {
  display: flex;
  align-items: center;
  height: 16px;
  line-height: 16px;
  white-space: nowrap;
  font-size: 10.800px;
}
.rbtn .big + .rline { margin-top: 1px; }
.rbtn.off { color: #c8c6c4; }
.caret { width: 8px; height: 8px; margin-left: 1px; }
.paste { width: 40px; margin-left: 8px; padding-top: 12px; display: flex; flex-direction: column; align-items: center; color: #c8c6c4; font-size: 10.800px; }
.paste span { margin-top: 1px; line-height: 16px; }
.clip-list { margin-left: 6px; padding-top: 9px; display: flex; flex-direction: column; gap: 8px; }
.clip-item { display: flex; align-items: center; gap: 3px; height: 16px; font-size: 10.800px; color: #484644; white-space: nowrap; }
.collapse { position: absolute; right: 6px; bottom: 7px; width: 10px; height: 8px; }

/* main */
.main { flex: 1; min-height: 0; display: flex; }
.rail {
  position: relative;
  width: 41px;
  flex: none;
  padding: 12px 0 0 1px;
  display: flex;
  flex-direction: column;
  align-items: center;
  gap: 24px;
  background: #f3f2f1;
  border-right: 1px solid #d2d0ce;
}
.rail-mark { position: absolute; left: 0; top: 0; width: 3px; height: 34px; background: #117865; }
.rail-ic { width: 16px; height: 16px; }
.center { width: 1251px; flex: none; display: flex; flex-direction: column; }
.canvas { position: relative; flex: 1; background: #fff; overflow: hidden; }
.visual { position: absolute; left: 10px; width: 1055px; padding-left: 5px; display: flex; flex-direction: column; }
.v1 { top: 0; height: 260px; }
.v2 { top: 265px; height: 425px; }
.vtitle {
  margin: 0;
  height: 22px;
  line-height: 22px;
  font-family: Roboto, sans-serif;
  font-size: 15.500px;
  font-weight: 400;
  letter-spacing: 0.3px;
  color: #252423;
  white-space: nowrap;
}
.legend {
  height: 18px;
  margin-top: 7px;
  padding-left: 2px;
  display: flex;
  align-items: center;
  color: #666;
  font-size: 12.250px;
  white-space: nowrap;
}
.legend.small { font-size: 11px; }
.dot { width: 9px; height: 9px; border-radius: 50%; margin-right: 2px; }
.dot.a { background: #118dff; }
.dot.b { background: #12239e; margin-left: 6px; }
.plot { position: absolute; left: 0; width: 1055px; }
.p1 { top: 50px; height: 205px; }
.p2 { top: 53px; height: 372px; }
.grid { stroke: #c4c4c4; stroke-width: 1; stroke-dasharray: 1 4; }
.tick { fill: #666; font-size: 11px; font-family: "Open Sans", sans-serif; }
.month { fill: #666; font-size: 11px; font-family: "Open Sans", sans-serif; }
.year { fill: #666; font-size: 11.800px; font-family: "Open Sans", sans-serif; }
.ytitle-s { fill: #444; font-size: 10.200px; font-family: "Open Sans", sans-serif; }
.ytitle { fill: #333; font-size: 13.500px; font-family: "Open Sans", sans-serif; }
.xtitle-s { fill: #444; font-size: 9.500px; font-family: "Open Sans", sans-serif; }
.xtitle { fill: #333; font-size: 13px; font-family: Roboto, sans-serif; font-weight: 400; letter-spacing: 0.3px; }
.frame { position: absolute; inset: 0; border: 1px solid #c8c8c8; pointer-events: none; }
.h { position: absolute; width: 9px; height: 9px; border: 0 solid #a6a6a6; }
.tl { left: -2px; top: -1px; border-width: 3px 0 0 3px; }
.tr { right: -2px; top: -1px; border-width: 3px 3px 0 0; }
.bl { left: -2px; bottom: -2px; border-width: 0 0 3px 3px; }
.br { right: -2px; bottom: -2px; border-width: 0 3px 3px 0; }
.m { position: absolute; background: #a6a6a6; }
.mt, .mb { left: 522px; width: 12px; height: 3px; }
.mt { top: -2px; }
.mb { bottom: -2px; }
.ml, .mr { top: 207px; width: 3px; height: 12px; }
.ml { left: -2px; }
.mr { right: -2px; }
.vheader { position: absolute; right: 5px; top: 5px; display: flex; gap: 12px; }
.vh.gap { margin-left: 9px; }
.page-end {
  position: absolute;
  left: 3px;
  right: 2px;
  top: 704px;
  border-top: 2px dotted #252423;
}
.pagebar {
  height: 35px;
  flex: none;
  position: relative;
  display: flex;
  background: #f3f2f1;
}
.view-btn { width: 24px; margin-left: 10px; display: flex; flex-direction: column; align-items: center; position: relative; }
.pv { width: 20px; height: 17px; margin-top: 7px; }
.view-line { position: absolute; left: 0; right: 0; top: 29px; height: 2.500px; border-radius: 2px; background: #117865; }
.phone { margin-left: 20px; }
.pv2 { width: 14px; height: 21px; margin-top: 5px; }
.nav { width: 8px; height: 10px; margin: 13px 0 0 14px; }
.nav.n2 { margin-left: 14px; }
.page-tab {
  width: 76px;
  margin-left: 5px;
  display: flex;
  align-items: center;
  justify-content: center;
  padding-top: 2px;
  background: #fff;
  border-left: 1px solid #a19f9d;
  border-right: 1px solid #a19f9d;
  border-bottom: 4px solid #117865;
  font-size: 11.400px;
  font-weight: 500;
}
.add-tab { width: 39px; height: 32px; margin-top: 2px; display: flex; align-items: center; justify-content: center; background: #117865; }
.add-tab svg { width: 11px; height: 11px; }

/* panels */
.panel-head { height: 38px; display: flex; align-items: center; }
.panel-title { font-size: 14.700px; font-weight: 600; color: #323130; }
.chev { width: 18px; height: 18px; }
.filters {
  width: 201px;
  flex: none;
  background: #fff;
  border-left: 1px solid #c8c6c4;
  padding: 0 8px;
  display: flex;
  flex-direction: column;
  color: #323130;
}
.filters .panel-head { padding-left: 3px; }
.filters .panel-title { margin-left: 8px; }
.eye { width: 14px; height: 14px; margin-left: auto; }
.filters .chev { margin: 0 -1px 0 14px; }
.f-search {
  margin: 7px 4px 0 0;
  height: 30px;
  display: flex;
  align-items: center;
  padding-left: 11px;
  gap: 12px;
  border: 1px solid #a19f9d;
  border-radius: 2px;
  color: #484644;
  font-size: 12.400px;
  line-height: 26px;
}
.f-rule { margin: 5px -8px 0; border-top: 1px solid #c8c6c4; }
.f-sec {
  display: flex;
  justify-content: space-between;
  align-items: center;
  height: 18px;
  margin: 26px 0 8px;
  color: #484644;
  padding-right: 4px;
}
.f-sec.first { margin-top: 15px; margin-bottom: 8px; }
.f-sec b { font-weight: 400; color: #605e5c; }
.f-card {
  height: 45px;
  flex: none;
  margin-bottom: 7px;
  padding: 5px 8px;
  display: flex;
  flex-direction: column;
  justify-content: center;
  border: 1px solid #c8c6c4;
  border-radius: 2px;
  line-height: 18px;
  color: #484644;
}
.f-card.add { align-items: center; margin-bottom: 0; color: #323130; }
.viz {
  width: 182px;
  flex: none;
  background: #f3f2f1;
  border-left: 1px solid #d2d0ce;
  border-right: 1px solid #d2d0ce;
  display: flex;
  flex-direction: column;
}
.tight { padding: 0 6px 0 8px; justify-content: space-between; }
.build { height: 16px; line-height: 16px; padding-left: 8px; font-weight: 600; font-size: 11px; }
.build-tabs { height: 32px; margin-top: 3px; position: relative; }
.bt { position: absolute; top: 0; width: 32px; height: 32px; display: flex; align-items: center; justify-content: center; }
.bt svg { width: 24px; height: 24px; }
.bt.sel { left: 8px; background: #d2d0ce; border-radius: 2px; }
.bt.second { left: 75px; }
.bt.third { left: 140px; }
.viz-rule { position: relative; height: 1px; margin-top: 12px; background: #a19f9d; flex: none; }
.viz-rule.low { margin-top: 4px; background: #d2d0ce; }
.notch {
  position: absolute;
  left: 18px;
  top: -6px;
  width: 11px;
  height: 11px;
  background: #f3f2f1;
  border-left: 1px solid #a19f9d;
  border-top: 1px solid #a19f9d;
  transform: rotate(45deg);
}
.gallery { margin-top: 6px; padding-left: 6px; display: grid; grid-template-columns: repeat(6, 28px); grid-auto-rows: 28px; }
.cell { display: flex; align-items: center; justify-content: center; }
.cell svg { width: 19px; height: 19px; }
.cell.sel { background: #e1dfdd; border: 1px solid #a19f9d; margin: 2px; }
.wells { padding: 9px 6px 0 5px; display: flex; flex-direction: column; }
.wl { height: 16px; line-height: 16px; padding-left: 7px; color: #484644; margin-bottom: 5px; flex: none; }
.wl.semi { font-weight: 600; margin-bottom: 3px; }
.well {
  height: 28px;
  flex: none;
  display: flex;
  align-items: center;
  padding-left: 9px;
  margin-bottom: 11px;
  background: #fff;
  border: 1px dashed #d2d0ce;
  color: #484644;
  white-space: nowrap;
}
.well.full {
  height: 62px;
  display: block;
  padding: 3px 1px 0;
  border-color: #c8c6c4;
}
.well.drill { margin: 5px 0 0; padding-left: 7px; height: 27px; font-size: 11.300px; }
.pill {
  height: 22px;
  margin-bottom: 4px;
  display: flex;
  align-items: center;
  justify-content: space-between;
  padding: 0 3px 0 4px;
  background: #edebe9;
  border: 1px solid #c8c6c4;
  border-radius: 1px;
  color: #484644;
}
.pill span { white-space: nowrap; }
.pill svg { width: 27px; height: 11px; }
.drill-row { height: 27px; display: flex; align-items: center; justify-content: space-between; padding: 0 15px 0 7px; color: #484644; flex: none; }
.toggle {
  position: relative;
  width: 32px;
  height: 15px;
  display: flex;
  align-items: center;
  border: 1px solid #8a8886;
  border-radius: 8px;
  background: #fff;
  font-size: 8px;
  color: #605e5c;
}
.toggle em { font-style: normal; margin-left: 11px; }
.toggle i { position: absolute; left: 2px; top: 2px; width: 9px; height: 9px; border-radius: 50%; background: #605e5c; }
.toggle.on { background: #117865; border-color: #117865; color: #fff; }
.toggle.on em { margin-left: 4px; font-weight: 600; }
.toggle.on i { left: auto; right: 2px; background: #fff; }
.data {
  flex: 1;
  background: #f3f2f1;
  display: flex;
  flex-direction: column;
}
.d-search {
  margin: 7px 4px 0 4px;
  height: 26px;
  display: flex;
  align-items: center;
  gap: 4px;
  padding-left: 7px;
  border: 1px solid #8a8886;
  border-radius: 2px;
  color: #605e5c;
  font-size: 12.400px;
  flex: none;
}
.tree { list-style: none; margin: 10px 0 0; padding: 0; }
.row { position: relative; height: 24px; display: flex; align-items: center; color: #605e5c; }
.tw { width: 11px; height: 11px; margin-left: 7px; }
.tbl { position: relative; width: 13px; height: 13px; margin-left: 4px; }
.tbl svg { width: 13px; height: 13px; }
.tbl .badge { position: absolute; left: 6px; top: 5px; width: 12px; height: 12px; }
.row:not(.field) .rname { margin-left: 6px; }
.cb {
  width: 12px;
  height: 12px;
  margin-left: 38px;
  border: 1px solid #8a8886;
  border-radius: 2px;
  background: #fafafa;
  flex: none;
}
.cb.on { background: #117865; border-color: #117865; }
.cb svg { width: 10px; height: 10px; }
.sum { width: 13px; height: 15px; margin-left: 6px; flex: none; }
.sum svg { width: 13px; height: 15px; }
.field .rname { margin-left: 7px; }
.status {
  height: 23px;
  flex: none;
  display: flex;
  align-items: center;
  justify-content: space-between;
  padding: 0 17px 0 4px;
  background: #f3f2f1;
  border-top: 1px solid #d2d0ce;
  color: #605e5c;
}
.zoom { display: flex; align-items: center; color: #323130; }
.zb { width: 11px; text-align: center; font-size: 13px; line-height: 13px; }
.track { position: relative; width: 105px; height: 1px; background: #605e5c; }
.track i { position: absolute; left: 49px; top: -6px; width: 3px; height: 13px; background: #323130; }
.pct { width: 36px; margin-left: 5px; text-align: center; }
.fit { width: 18px; height: 14px; margin-left: 12px; }
.watermark {
  position: absolute;
  left: 1578px;
  top: 960px;
  display: flex;
  align-items: center;
  opacity: 0.075;
  pointer-events: none;
  color: #3b3a39;
  font-family: Lato, sans-serif;
  font-weight: 700;
  font-size: 88px;
}
.watermark svg { width: 120px; height: 120px; }
.watermark span { margin: -4px 0 0 -2px; }
</style>

<style>
html, body { margin: 0; padding: 0; background: #fff; }
</style>
